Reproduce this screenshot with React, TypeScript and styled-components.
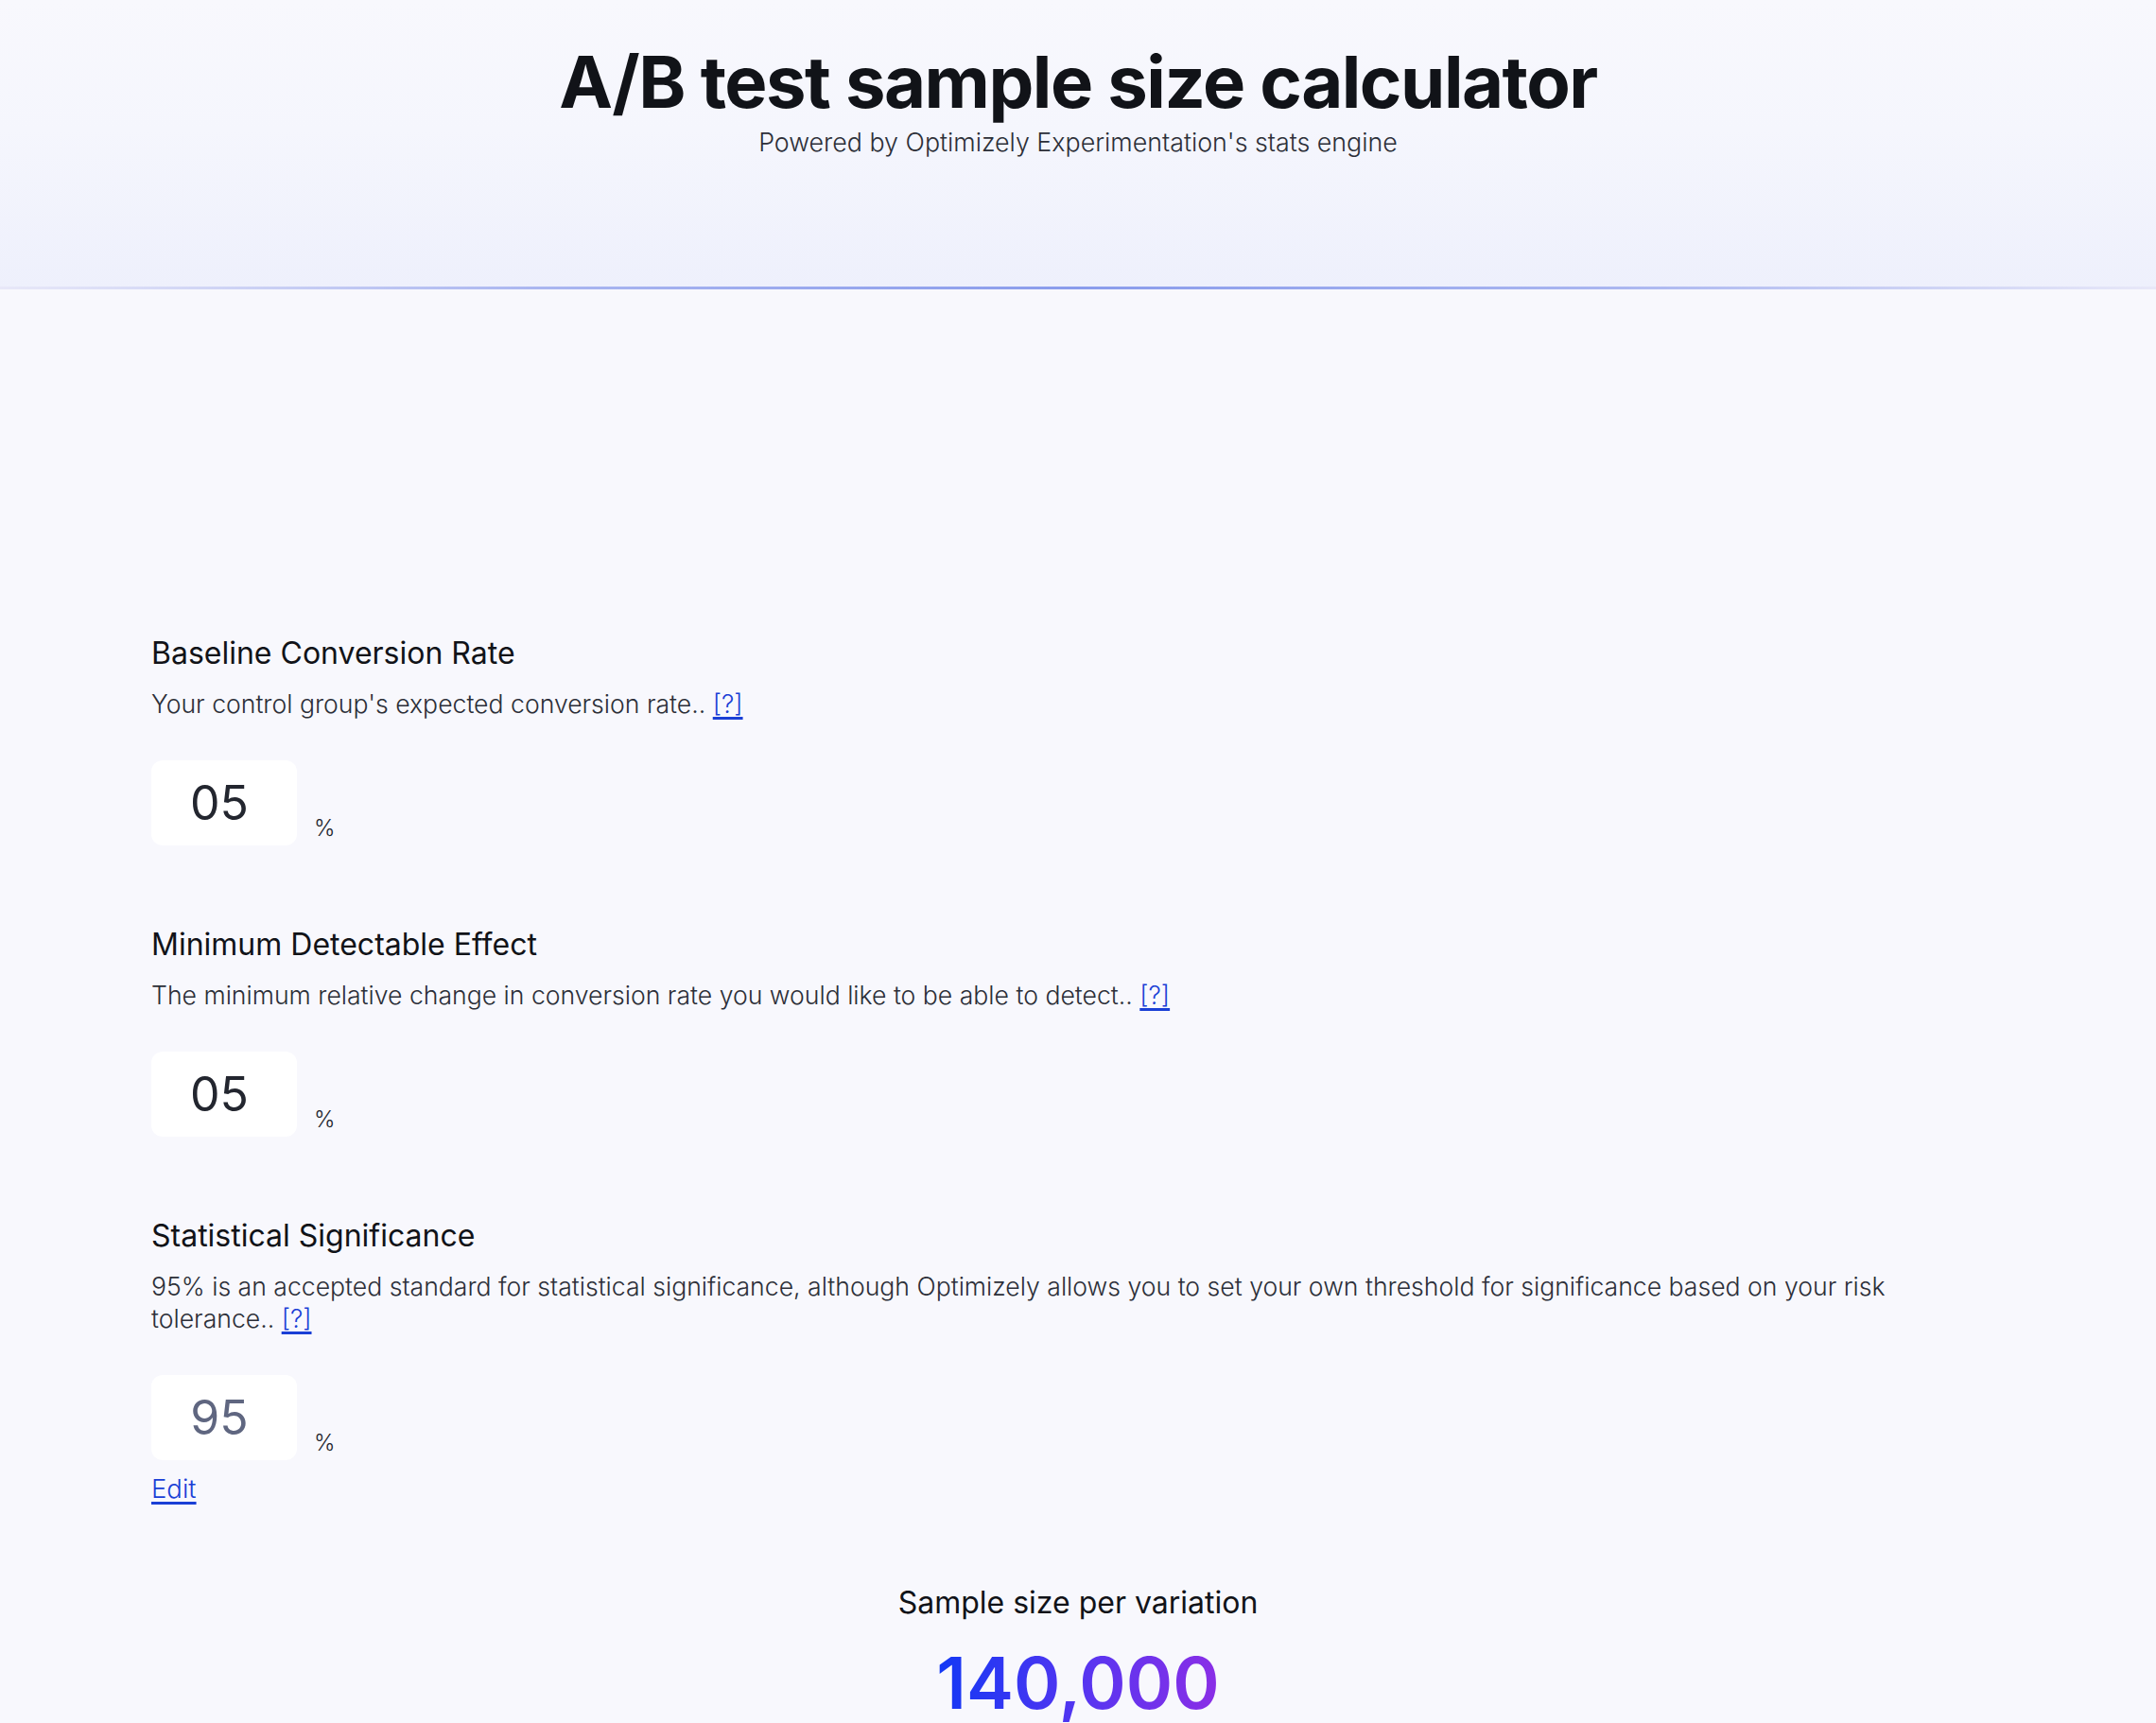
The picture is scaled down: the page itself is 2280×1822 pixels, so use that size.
import * as React from 'react';
import styled, { createGlobalStyle } from 'styled-components';

const GlobalStyle = createGlobalStyle`
  html, body {
    margin: 0;
    padding: 0;
    background: #f8f8fd;
    font-family: Inter, "Noto Sans", sans-serif;
    color: #111318;
  }
`;

const Header = styled.header`
  position: relative;
  height: 304px;
  padding-top: 40px;
  box-sizing: border-box;
  text-align: center;
  background: linear-gradient(180deg, #f8f8fd 0%, #f5f6fd 45%, #eef0fc 100%);
  &::after {
    content: '';
    position: absolute;
    left: 0;
    right: 0;
    bottom: -2px;
    height: 3px;
    background: linear-gradient(90deg, #e8e8f8 0%, #aab6f0 25%, #8a9cec 50%, #aab6f0 75%, #e8e8f8 100%);
  }
`;

const Title = styled.h1`
  margin: 0;
  font-size: 76px;
  line-height: 92px;
  font-weight: 700;
  letter-spacing: -1.5px;
  color: #111318;
`;

const Subtitle = styled.p`
  margin: 1px 0 0;
  font-size: 26.8px;
  line-height: 34px;
  font-weight: 300;
  color: #2c2f38;
`;

const Main = styled.main`
  padding: 368px 160px 80px;
`;

const Field = styled.section`
  display: flex;
  flex-direction: column;
  margin-bottom: 86.5px;
  &:last-of-type {
    margin-bottom: 0;
  }
`;

const Label = styled.h2`
  margin: 0 0 16.5px;
  font-size: 32px;
  line-height: 38px;
  font-weight: 400;
  color: #111318;
`;

const Description = styled.p`
  margin: 0;
  max-width: 1880px;
  font-size: 26.6px;
  line-height: 34px;
  font-weight: 300;
  color: #2c2f38;
`;

const HelpLink = styled.a`
  color: #1a3fd6;
  text-decoration: underline;
  text-decoration-thickness: 3px;
  text-underline-offset: 4px;
  cursor: pointer;
`;

const InputRow = styled.div`
  display: flex;
  align-items: flex-end;
  gap: 18px;
  margin-top: 43px;
`;

const ValueBox = styled.div<{ $muted?: boolean }>`
  width: 154px;
  height: 90px;
  border-radius: 12px;
  background: #ffffff;
  display: flex;
  align-items: center;
  justify-content: center;
  padding-right: 10px;
  box-sizing: border-box;
  font-size: 50px;
  font-weight: 400;
  color: ${(p) => (p.$muted ? '#5f6680' : '#23262f')};
`;

const Unit = styled.span`
  font-size: 24px;
  line-height: 24px;
  font-weight: 300;
  color: #23262f;
  padding-bottom: 6px;
`;

const EditLink = styled(HelpLink)`
  align-self: flex-start;
  margin-top: 13px;
  font-size: 27.5px;
  line-height: 34px;
  font-weight: 300;
`;

const Result = styled.div`
  display: flex;
  flex-direction: column;
  align-items: center;
  margin-top: 84px;
`;

const ResultLabel = styled.div`
  font-size: 32px;
  line-height: 40px;
  font-weight: 400;
  color: #111318;
`;

const ResultValue = styled.div`
  margin-top: 17px;
  font-size: 75px;
  line-height: 96px;
  font-weight: 600;
  background: linear-gradient(90deg, #1238f5 0%, #5a35f0 55%, #8b2ee6 100%);
  -webkit-background-clip: text;
  background-clip: text;
  color: transparent;
`;

type FieldData = {
  label: string;
  description: string;
  value: string;
  muted?: boolean;
  editable?: boolean;
};

const fields: FieldData[] = [
  {
    label: 'Baseline Conversion Rate',
    description: "Your control group's expected conversion rate..",
    value: '05',
  },
  {
    label: 'Minimum Detectable Effect',
    description: 'The minimum relative change in conversion rate you would like to be able to detect..',
    value: '05',
  },
  {
    label: 'Statistical Significance',
    description:
      '95% is an accepted standard for statistical significance, although Optimizely allows you to set your own threshold for significance based on your risk tolerance..',
    value: '95',
    muted: true,
    editable: true,
  },
];

export default function App() {
  return (
    <>
      <GlobalStyle />
      <Header>
        <Title>A/B test sample size calculator</Title>
        <Subtitle>Powered by Optimizely Experimentation's stats engine</Subtitle>
      </Header>
      <Main>
        {fields.map((f) => (
          <Field key={f.label}>
            <Label>{f.label}</Label>
            <Description>
              {f.description} <HelpLink>[?]</HelpLink>
            </Description>
            <InputRow>
              <ValueBox $muted={f.muted}>{f.value}</ValueBox>
              <Unit>%</Unit>
            </InputRow>
            {f.editable && <EditLink>Edit</EditLink>}
          </Field>
        ))}
        <Result>
          <ResultLabel>Sample size per variation</ResultLabel>
          <ResultValue>140,000</ResultValue>
        </Result>
      </Main>
    </>
  );
}
